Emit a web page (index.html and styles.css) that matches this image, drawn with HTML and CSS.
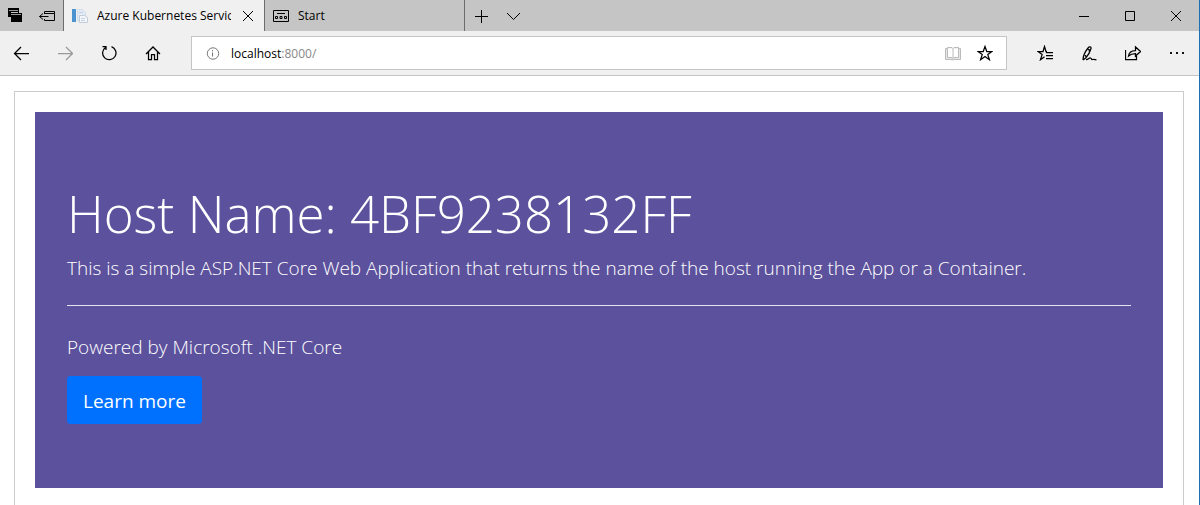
FILE: index.html
```html
<!DOCTYPE html>
<html lang="en">
<head>
<meta charset="utf-8">
<meta name="viewport" content="width=device-width, initial-scale=1">
<title>Azure Kubernetes Service</title>
<link rel="stylesheet" href="styles.css">
</head>
<body>
<div class="browser">
  <header class="tabbar">
    <div class="tab-tools">
      <button class="icon-button" aria-label="Tabs you've set aside">
        <svg class="icon" viewBox="0 0 16 16"><path fill="#000" stroke="none" d="M1 0h11v5h-1V4H4v5H1z"/><path fill="#000" stroke="none" d="M4 5h11v9H4z"/><path d="M2 2.500h9M4 6.500h10" stroke="#999"/></svg>
      </button>
      <button class="icon-button" aria-label="Set these tabs aside">
        <svg class="icon" viewBox="0 0 16 16"><path d="M5.500 6V3.500h10v9h-10V11M5.500 5.500h10M.500 8.500h9M4 5.500l-3.500 3 3.500 3"/></svg>
      </button>
    </div>
    <div class="tab tab-active">
      <svg class="icon" viewBox="0 0 16 16"><path d="M0 1h4v13H0z" fill="#4a92d0" stroke="none"/><path d="M5.500 1.500h5l3 3v8h-8z" fill="#e2eaf6" stroke="#d3dce9"/><path d="M7.500 7.500h5l3 2v5h-8z" fill="#f3f7fc" stroke="#c3cdd9"/><path d="M9 10.500h4M9 12.500h4M7 4.500h4" stroke="#c4d1e3"/></svg>
      <span class="tab-title">Azure Kubernetes Service</span>
      <button class="icon-button tab-close" aria-label="Close tab">
        <svg class="icon" viewBox="0 0 16 16"><path d="M3 3l10 10M13 3L3 13"/></svg>
      </button>
    </div>
    <div class="tab">
      <svg class="icon" viewBox="0 0 16 16"><path d="M.500 2.500h15v11H.500zM4 5.500h8M2.500 8.500h2v2h-2zM7 8.500h2v2H7zM11.500 8.500h2v2h-2z"/></svg>
      <span class="tab-title">Start</span>
    </div>
    <div class="new-tab">
      <button class="icon-button" aria-label="New tab">
        <svg class="icon" viewBox="0 0 16 16"><path d="M2 8.500h13M8.500 2v13"/></svg>
      </button>
      <button class="icon-button" aria-label="Show tab previews">
        <svg class="icon" viewBox="0 0 16 16"><path d="M2 5l6.500 6.500L15 5"/></svg>
      </button>
    </div>
    <div class="window-controls">
      <button class="icon-button" aria-label="Minimize"><svg class="icon" viewBox="0 0 16 16"><path d="M3 8.500h10"/></svg></button>
      <button class="icon-button" aria-label="Maximize"><svg class="icon" viewBox="0 0 16 16"><path d="M3.500 3.500h9v9h-9z"/></svg></button>
      <button class="icon-button" aria-label="Close"><svg class="icon" viewBox="0 0 16 16"><path d="M3 3l10 10M13 3L3 13"/></svg></button>
    </div>
  </header>

  <nav class="toolbar" aria-label="Browser">
    <div class="nav-buttons">
      <button class="icon-button" aria-label="Back"><svg class="icon icon-bold" viewBox="0 0 16 16"><path d="M1.500 8.500H16M8 2L1.500 8.500 8 15"/></svg></button>
      <button class="icon-button" aria-label="Forward" disabled><svg class="icon icon-bold" viewBox="0 0 16 16"><path d="M1 8.500h14.500M9 2l6.500 6.500L9 15"/></svg></button>
      <button class="icon-button" aria-label="Refresh"><svg class="icon icon-bold" viewBox="0 0 16 16"><path d="M10.500 1.700A6.700 6.700 0 1 1 4.500 2.500M1.500 1.500H5V5"/></svg></button>
      <button class="icon-button" aria-label="Home"><svg class="icon icon-bold" viewBox="0 0 16 16"><path d="M1 9l7-7 7 7M3.500 7v7.500h3v-5h3v5h3V7"/></svg></button>
    </div>
    <div class="address">
      <svg class="icon icon-info" viewBox="0 0 16 16"><circle cx="8" cy="8.500" r="5.700"/><path d="M7.500 7.500v4M7.500 5.200v1.200"/></svg>
      <a class="url" href="#">localhost<span class="url-rest">:8000/</span></a>
      <button class="icon-button" aria-label="Reading view" disabled><svg class="icon" viewBox="0 0 16 16"><path fill="#e6e6e6" d="M.500 3.500h2v-1H7l1 1 1-1h4.500v1h2v11H9l-1 .500-1-.500H.500zM2.500 3.500v9H7l1 1 1-1h4.500v-9M8 3.500v10"/></svg></button>
      <button class="icon-button" aria-label="Add to favorites"><svg class="icon icon-bold" viewBox="0 0 16 16"><path d="M8 1.500l1.800 5h5.200l-4.200 3.100 1.600 5.100L8 11.500l-4.400 3.200 1.600-5.100L1 6.500h5.200z"/></svg></button>
    </div>
    <div class="actions">
      <button class="icon-button" aria-label="Favorites hub"><svg class="icon icon-bold" viewBox="0 0 16 16"><path d="M10 6.500H9L7.500 1.500l-1.500 5H1l4.100 3.100-1.600 5.100 4-3M9 7.500h7M9 10.500h7M9 13.500h7"/></svg></button>
      <button class="icon-button" aria-label="Add notes"><svg class="icon icon-bold" viewBox="0 0 16 16"><path d="M2 15c0-3 1.500-7.500 5-12 1-1.500 3.500-1.500 3 .500-.800 3-3 7-5.300 9.500L2 15M4 10l1.500 2M7 4.500c1.500-.500 1.500 1 1 2M5 14.500c2 .500 3-2 4.500-1.500s.500 2 2 1.500 2-.500 4 .500"/></svg></button>
      <button class="icon-button" aria-label="Share"><svg class="icon icon-bold" viewBox="0 0 16 16"><path d="M.500 5v9.500h11V11M3.500 11c.500-4 3-5.500 7-5.500V2l5 4.500-5 4.500V8.500c-3 0-5 .500-7 2.500z"/></svg></button>
      <button class="icon-button" aria-label="More"><svg class="icon" viewBox="0 0 16 16"><path d="M1 7h2v2H1zM7 7h2v2H7zM13 7h2v2h-2z" fill="#111" stroke="none"/></svg></button>
    </div>
  </nav>

  <main class="page">
    <div class="panel">
      <section class="jumbotron">
        <h1 class="host">Host Name: 4BF9238132FF</h1>
        <p class="lead">This is a simple ASP.NET Core Web Application that returns the name of the host running the App or a Container.</p>
        <hr class="rule">
        <p class="lead powered">Powered by Microsoft .NET Core</p>
        <a class="learn" href="#">Learn more</a>
      </section>
    </div>
  </main>
</div>
</body>
</html>
```
FILE: styles.css
```css
* { box-sizing: border-box; }

body {
  margin: 0;
  font-family: "Segoe UI", "Open Sans", "Noto Sans", sans-serif;
  color: #000;
}

.browser {
  display: flex;
  flex-direction: column;
  height: 100vh;
  overflow: hidden;
  background: #fff;
  border-right: 1px solid #1c6fb5;
}

.icon {
  display: block;
  flex: none;
  width: 16px;
  height: 16px;
  fill: none;
  stroke: #000;
}

.icon-bold { stroke-width: 1.25; }

.icon-button {
  display: block;
  flex: none;
  padding: 0;
  border: 0;
  background: none;
}

.icon-button:disabled .icon { stroke: #999; }
.address .icon-button:disabled .icon { stroke: #bbb; }

/* Tab strip */
.tabbar {
  display: flex;
  flex: none;
  height: 31px;
  background: #c5c5c5;
}

.tab-tools {
  display: flex;
  align-items: center;
  gap: 16px;
  width: 63px;
  padding-left: 7px;
}

.tab {
  display: flex;
  align-items: center;
  gap: 9px;
  width: 200px;
  padding: 0 8px;
  border-right: 1px solid #6c6c6c;
  font-size: 12px;
  line-height: 16px;
}

.tab-active {
  width: 202px;
  border-left: 1px solid #6c6c6c;
  background: #f0f0f0;
}

.tab-title {
  flex: 1;
  overflow: hidden;
  white-space: nowrap;
}

.new-tab {
  display: flex;
  align-items: center;
  gap: 16px;
  padding-left: 8px;
}

.window-controls {
  display: flex;
  align-items: center;
  gap: 30px;
  margin-left: auto;
  padding-right: 15px;
}

/* Address bar row */
.toolbar {
  display: flex;
  flex: none;
  align-items: center;
  height: 45px;
  background: #f0f0f0;
  border-bottom: 1px solid #c5c5c5;
}

.nav-buttons {
  display: flex;
  gap: 28px;
  width: 191px;
  padding-left: 13px;
}

.address {
  display: flex;
  flex: 1;
  align-items: center;
  gap: 16px;
  height: 34px;
  padding: 0 13px;
  border: 1px solid #c5c5c5;
  background: #fff;
}

.icon-info { stroke: #777; }

.url {
  flex: 1;
  margin-left: -6px;
  color: #000;
  font-size: 12px;
  text-decoration: none;
}

.url-rest { color: #888; }

.actions {
  display: flex;
  gap: 28px;
  padding: 0 14px 0 30px;
}

/* Page content */
.page {
  flex: 1;
  min-height: 0;
  padding: 15px 15px 0 14px;
}

.panel {
  padding: 20px;
  border: 1px solid #ccc;
}

.jumbotron {
  padding: 64px 32px;
  background: #5c519c;
  color: #fff;
}

.host {
  margin: 0 0 2px;
  font-size: 51px;
  font-weight: 300;
  line-height: 75px;
}

.lead {
  margin: 0;
  font-size: 19px;
  font-weight: 300;
  line-height: 30px;
}

.powered { margin-bottom: 14px; }

.rule {
  height: 1px;
  margin: 22px 0 26px;
  border: 0;
  background: #e4e2ef;
}

.learn {
  display: inline-block;
  padding: 10px 16px 8px;
  border-radius: 4px;
  background: #0071ff;
  color: #fff;
  font-size: 19px;
  line-height: 30px;
  text-decoration: none;
  vertical-align: top;
}
```
